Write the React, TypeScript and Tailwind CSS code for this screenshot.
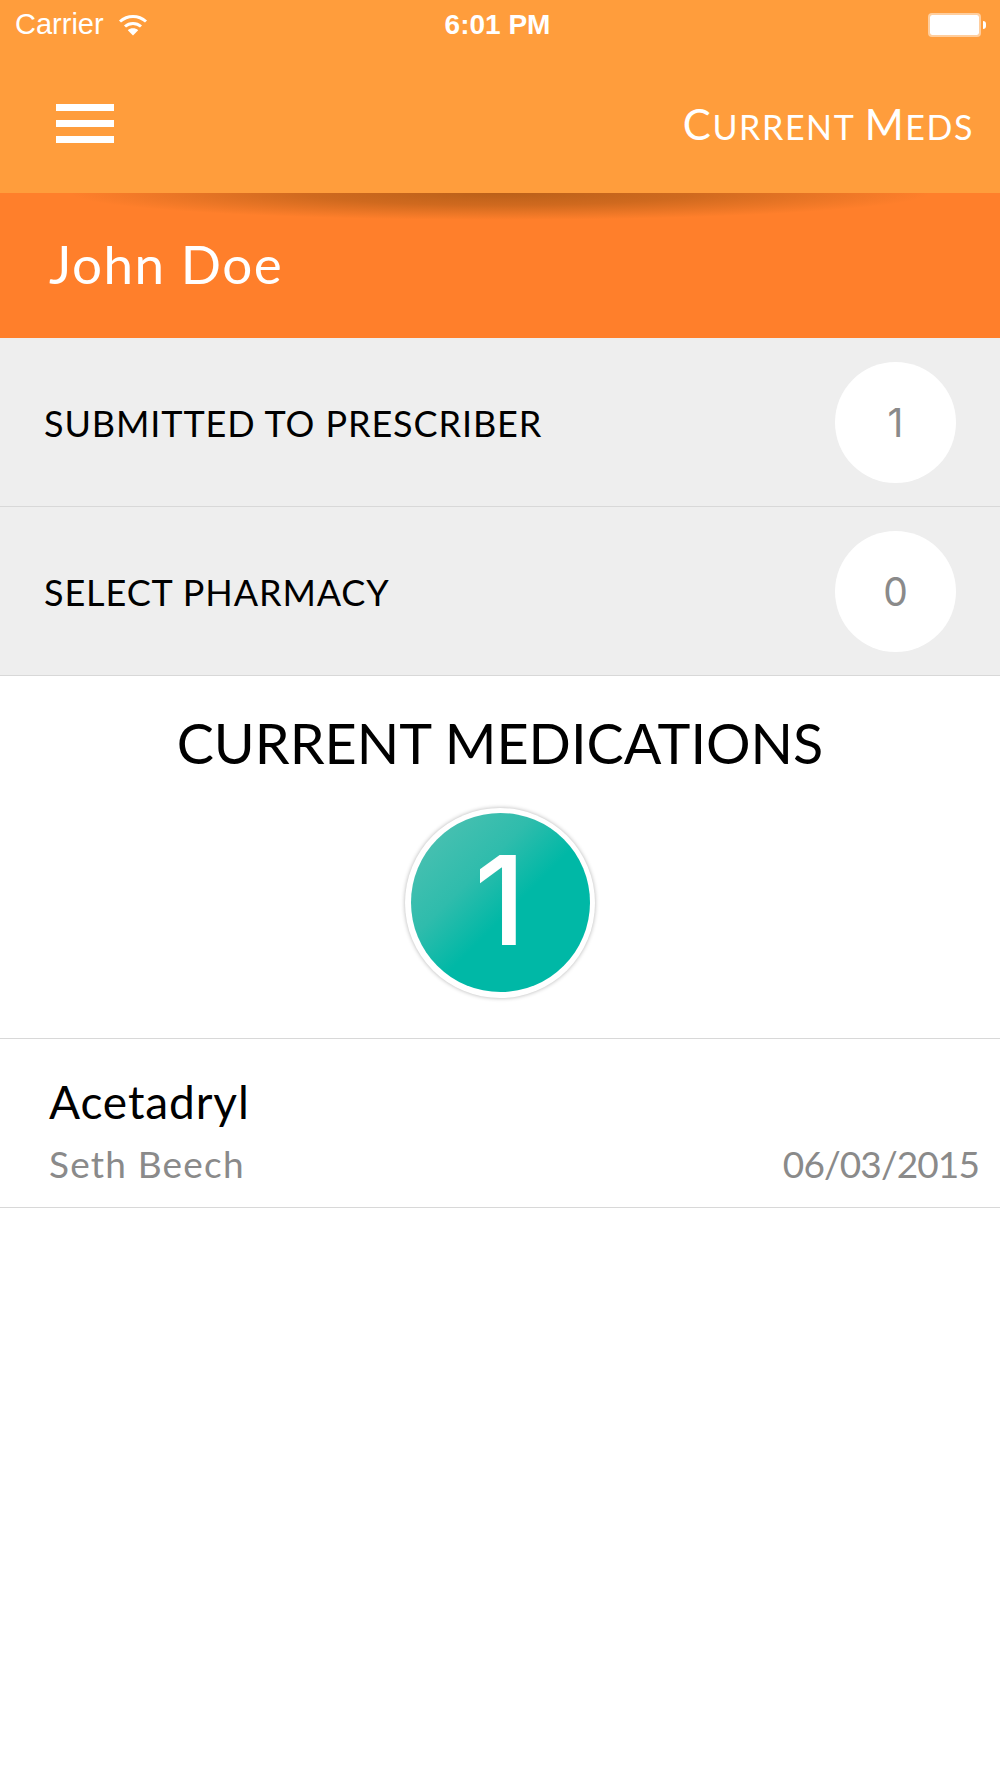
import React from 'react';

const rows = [
  { label: 'SUBMITTED TO PRESCRIBER', count: 1 },
  { label: 'SELECT PHARMACY', count: 0 },
];

function WifiIcon() {
  return (
    <svg width="30" height="22" viewBox="0 0 30 22" fill="none" stroke="white" strokeWidth="3">
      <path d="M2 7.5C9.5 0.7 20.5 0.7 28 7.5" />
      <path d="M7 12.5C11.5 8.4 18.5 8.4 23 12.5" />
      <path d="M15 21.5L9.8 16.2C12.6 13.6 17.4 13.6 20.2 16.2Z" fill="white" stroke="none" />
    </svg>
  );
}

function Battery() {
  return (
    <div className="flex items-center">
      <div className="w-[53px] h-[24px] rounded-[4px] border-2 border-white/50 bg-white bg-clip-padding" />
      <div className="ml-[2px] w-[3px] h-[8px] rounded-r-full bg-white" />
    </div>
  );
}

export default function App() {
  return (
    <div className="w-[1000px] h-[1778px] bg-white overflow-hidden font-['Lato',sans-serif]">
      {/* Header */}
      <div className="h-[193px] bg-[#ff9d3c] text-white">
        <div className="h-[50px] flex items-center justify-between pl-[15px] pr-[14px] font-['Liberation_Sans',sans-serif] text-[29px]">
          <div className="w-[300px] flex items-center gap-[14px]">
            <span>Carrier</span>
            <WifiIcon />
          </div>
          <span className="font-bold text-[28px] -ml-[6px]">6:01 PM</span>
          <div className="w-[300px] flex justify-end">
            <Battery />
          </div>
        </div>
        <div className="h-[143px] pt-[4px] flex items-center justify-between pl-[56px] pr-[26px]">
          <div className="flex flex-col gap-[9px]">
            <div className="w-[58px] h-[7px] bg-white" />
            <div className="w-[58px] h-[7px] bg-white" />
            <div className="w-[58px] h-[7px] bg-white" />
          </div>
          <span className="text-[34px] tracking-[1.6px] leading-none">
            <span className="text-[42px]">C</span>URRENT <span className="text-[42px]">M</span>EDS
          </span>
        </div>
      </div>

      {/* Name band */}
      <div className="relative h-[145px] bg-[#ff7f2b] flex items-center pl-[49px] pb-[5px]">
        <div className="absolute left-0 top-0 w-full h-[27px] bg-[radial-gradient(ellipse_43%_100%_at_50%_0%,rgba(130,70,10,0.55)_0%,rgba(130,70,10,0.38)_45%,rgba(130,70,10,0)_100%)]" />
        <span className="text-white text-[53px] leading-none tracking-[1.5px]">John Doe</span>
      </div>

      {/* Status rows */}
      {rows.map((row) => (
        <div key={row.label} className="h-[169px] bg-[#eeeeee] border-b border-[#d8d8d8] flex items-center justify-between pl-[44px] pr-[44px]">
          <span className="text-[36px] text-black leading-none tracking-[0.9px] mt-[2px]">{row.label}</span>
          <div className="mt-[1px] w-[121px] h-[121px] rounded-full bg-white flex items-center justify-center font-['Inter',sans-serif] text-[39px] text-[#8a8a8a] leading-none">
            {row.count}
          </div>
        </div>
      ))}

      {/* Current medications */}
      <div className="h-[363px] border-b border-[#d8d8d8] flex flex-col items-center">
        <h1 className="mt-[39px] text-[55.7px] text-black leading-none">CURRENT MEDICATIONS</h1>
        <div className="mt-[37px] w-[190px] h-[190px] rounded-full bg-white shadow-[0_0_4px_rgba(0,0,0,0.3)] flex items-center justify-center">
          <div className="w-[179px] h-[179px] rounded-full bg-[linear-gradient(135deg,#55c2b3_0%,#2fbcac_35%,#00b8a6_55%,#00b8a6_100%)] flex items-center justify-center font-['Inter',sans-serif] font-medium text-white text-[124px] leading-none pb-[6px]">
            1
          </div>
        </div>
      </div>

      {/* Medication row */}
      <div className="h-[169px] border-b border-[#d8d8d8] pl-[49px] pr-[21px] flex flex-col">
        <span className="mt-[40px] text-[46px] text-black leading-none tracking-[0.9px]">Acetadryl</span>
        <div className="mt-[20px] flex items-center justify-between text-[37px] text-[#8a8a8a] leading-none">
          <span className="tracking-[1.2px]">Seth Beech</span>
          <span className="tracking-[-0.9px]">06/03/2015</span>
        </div>
      </div>
    </div>
  );
}
